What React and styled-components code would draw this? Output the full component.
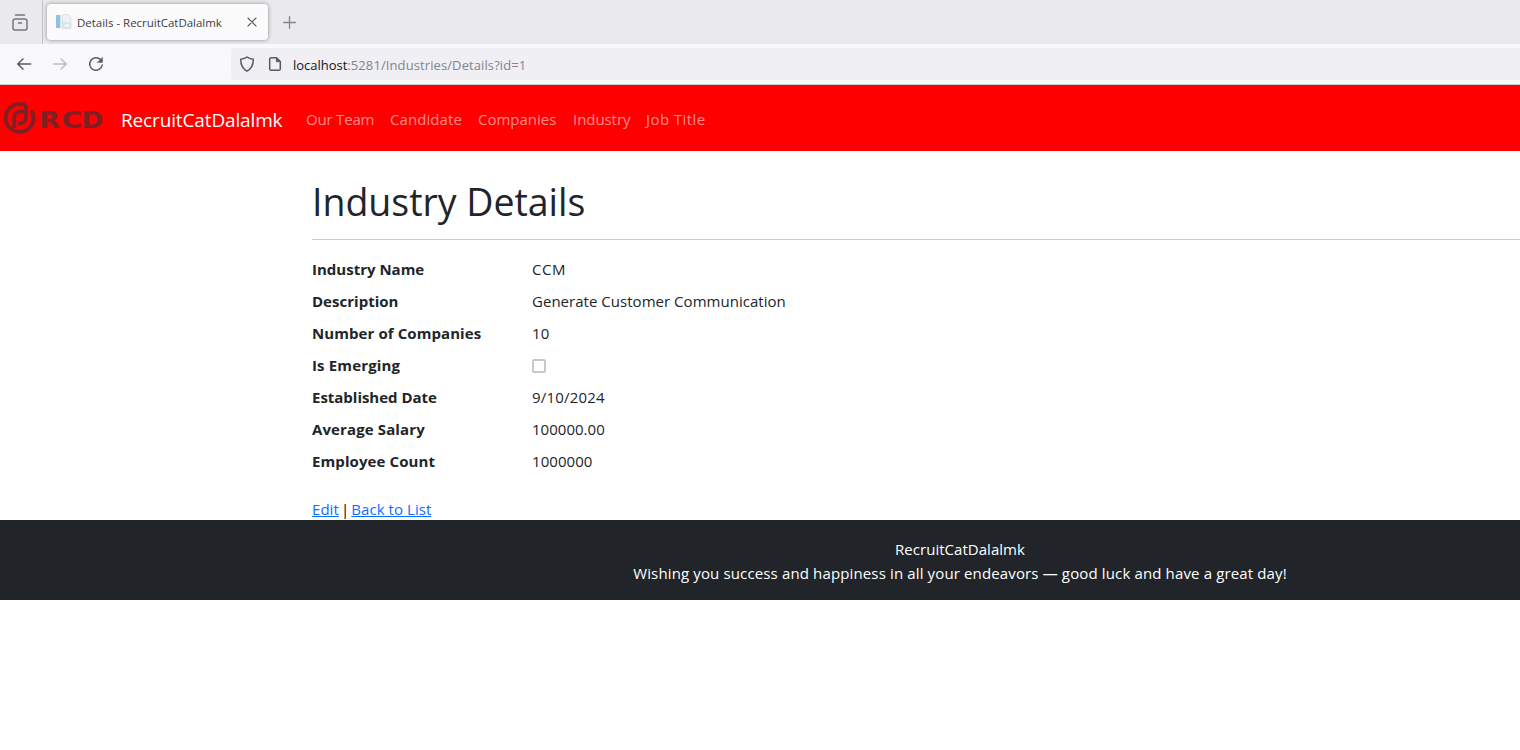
import React from 'react';
import styled, { createGlobalStyle } from 'styled-components';

const Global = createGlobalStyle`
  * { box-sizing: border-box; }
  html, body { margin: 0; overflow: hidden; background: #fff; }
  body { font-family: "Segoe UI", "Open Sans", "Noto Sans", sans-serif; font-size: 15px; line-height: 24px; color: #212529; }
`;
const Window = styled.div`width: 100%; height: 750px; background: #fff;`;
const TabStrip = styled.div`display: flex; align-items: center; height: 44px; background: #eae9ee;`;
const ViewButton = styled.div`display: flex; align-items: center; width: 43px; height: 44px; padding-left: 12px; border-right: 1px solid #c3c2c8;`;
const Tab = styled.div`
  display: flex; align-items: center; width: 221px; height: 36px; margin-left: 4px; padding: 0 11px 0 8px;
  background: #fbfbfc; border-radius: 4px; box-shadow: 0 0 4px rgba(0,0,0,.4);
  svg { flex: none; }
`;
const TabTitle = styled.span`
  flex: 1; margin: 1px 0 0 5px; font-size: 11.5px; line-height: 16px; color: #3d3c46; white-space: nowrap;
  letter-spacing: -.02px;
`;
const NewTab = styled.div`display: flex; margin: 1px 0 0 15px;`;
const Toolbar = styled.div`display: flex; align-items: center; height: 41px; background: #f9f9fb; border-bottom: 1px solid #cccccf;`;
const NavButtons = styled.div`display: flex; align-items: center; gap: 20px; width: 231px; padding-left: 16px;`;
const AddressBar = styled.div`
  display: flex; align-items: center; gap: 12px; flex: 1; height: 32px; padding-left: 8px; background: #f0eff4; border-radius: 4px 0 0 4px;
`;
const Url = styled.span`margin: 2px 0 0 -2px; font-size: 13px; line-height: 20px; color: #84838d; white-space: nowrap; letter-spacing: .1px;`;
const Host = styled.span`color: #15141a; letter-spacing: -.02px;`;
const SiteNav = styled.nav`display: flex; align-items: center; height: 66px; background: #f00;`;
const LogoText = styled.text`font: 700 23px "DejaVu Sans", sans-serif; fill: #7d2026;`;
const Brand = styled.a`margin: 3px 0 0 17px; width: 185px; font-size: 19px; line-height: 30px; color: #fff; white-space: nowrap; letter-spacing: -.14px;`;
const NavLink = styled.a`width: ${p => p.$w}px; margin-top: 2px; color: rgba(255,255,255,.55); white-space: nowrap; letter-spacing: ${p => p.$track}px;`;
const Main = styled.main`padding-left: 312px; height: 369px; padding-top: 24px;`;
const Title = styled.h1`margin: 0; padding-top: 3px; height: 56px; font-size: 37.5px; line-height: 48px; font-weight: 400; letter-spacing: -.03px;`;
const Rule = styled.hr`margin: 8px 0 17px; border: 0; height: 1px; background: #c8c9ca;`;
const List = styled.dl`display: grid; grid-template-columns: 220px 1fr; row-gap: 8px; margin: 0;`;
const Term = styled.dt`height: 24px; font-weight: 700; letter-spacing: ${p => p.$track}px;`;
const Value = styled.dd`height: 24px; margin: 0; letter-spacing: ${p => p.$track}px;`;
const Check = styled.span`display: block; width: 14px; height: 14px; margin-top: 6px; border: 2px solid #c7c7cf; border-radius: 2px;`;
const Actions = styled.div`display: flex; margin-top: 24px; color: #000;`;
const Divider = styled.span`width: 12.500px; text-align: center;`;
const Link = styled.a`color: #0d6efd; text-decoration: underline; letter-spacing: .05px;`;
const Footer = styled.footer`height: 80px; padding: 17px 0 0 400px; background: #212529; color: #fff; text-align: center;`;
const FooterLine = styled.div`letter-spacing: ${p => p.$track || 0}px;`;

const details = [
  ['Industry Name', 'CCM', 0, 0.5],
  ['Description', 'Generate Customer Communication', 0.02, 0.03],
  ['Number of Companies', '10', 0.08, 0.2],
  ['Is Emerging', null, 0.15, 0],
  ['Established Date', '9/10/2024', -0.02, 0.2],
  ['Average Salary', '100000.00', 0.12, 0.02],
  ['Employee Count', '1000000', 0.1, 0.06],
];
const links = [
  ['Our Team', 84, -0.2],
  ['Candidate', 88, 0.08],
  ['Companies', 95, 0],
  ['Industry', 73, -0.06],
  ['Job Title', 80, 0.42],
];

const stroke = { fill: 'none', stroke: '#5b5b66', strokeWidth: 1.5, strokeLinecap: 'round', strokeLinejoin: 'round' };

const Logo = () => (
  <svg width="104" height="40" viewBox="0 0 104 40">
    <g fill="none" stroke="#7d2026" strokeWidth="3.8">
      <path d="M31.300 12.500A13.900 13.900 0 1 1 19.700 6.100H22Q26 6.100 26 10V19.500A5.900 5.900 0 0 1 20.100 25.400H18" />
      <path d="M14.300 30V19.500A5.800 5.800 0 0 1 20.100 13.700H24.500" />
    </g>
    <LogoText transform="translate(38.900 29.500) scale(1.18 1)">R</LogoText>
    <LogoText transform="translate(61.400 29.500) scale(1.22 1)">C</LogoText>
    <LogoText transform="translate(81.600 29.500) scale(1.14 1)">D</LogoText>
  </svg>
);

export default function App() {
  return (
    <>
      <Global />
      <Window>
        <TabStrip>
          <ViewButton>
            <svg width="16" height="18" {...stroke} stroke="#77767f"><path d="M3.500 2h9" /><rect x="1" y="6" width="14" height="11" rx="2" /><path d="M6.500 10h3" /></svg>
          </ViewButton>
          <Tab>
            <svg width="17" height="16">
              <path d="M1 1h4v13H1z" fill="#8fc1e1" /><path d="M5 1h1.500v13H5z" fill="#d5e6f0" />
              <path d="M7.500.500h6l2.500 3v11H7.500z" fill="#eef0f2" stroke="#dfe3e7" />
              <path d="M8 8.500h8v5H8z" fill="#d9dfe5" /><path d="M9.500 10.500h5v2h-5z" fill="#f7f9fa" />
            </svg>
            <TabTitle>Details - RecruitCatDalalmk</TabTitle>
            <svg width="10" height="10" {...stroke} strokeWidth="1.1"><path d="M1 1l8 8M9 1l-8 8" /></svg>
          </Tab>
          <NewTab><svg width="13" height="13" {...stroke} stroke="#85848c" strokeWidth="1.3"><path d="M6.500 .700v11.600M.700 6.500h11.600" /></svg></NewTab>
        </TabStrip>
        <Toolbar>
          <NavButtons>
            <svg width="16" height="16" {...stroke}><path d="M1.700 8h13M7 3L1.700 8 7 13" /></svg>
            <svg width="16" height="16" {...stroke} stroke="#bcbcc2"><path d="M1.300 8h13M9 3l5.300 5L9 13" /></svg>
            <svg width="16" height="16" {...stroke}><path d="M14.200 9A6.300 6.300 0 1 1 12.500 3.600" /><path d="M14.500 1.500v5h-5z" fill="#5b5b66" strokeWidth=".5" /></svg>
          </NavButtons>
          <AddressBar>
            <svg width="16" height="16" {...stroke}><path d="M8 1C6.500 2.300 4.200 2.900 1.700 3.200C1.600 8.500 3 12.500 8 15.200C13 12.500 14.400 8.500 14.300 3.200C11.800 2.900 9.500 2.300 8 1z" /></svg>
            <svg width="16" height="16" {...stroke}><path d="M9.500 1.700H4Q2.700 1.700 2.700 3v10Q2.700 14.300 4 14.300h8Q13.300 14.300 13.300 13V5.500z" /><path d="M9.300 1.700v4h4z" fill="#5b5b66" strokeWidth=".8" /></svg>
            <Url><Host>localhost</Host>:5281/Industries/Details?id=1</Url>
          </AddressBar>
        </Toolbar>
        <SiteNav>
          <Logo />
          <Brand>RecruitCatDalalmk</Brand>
          {links.map(([t, w, track]) => <NavLink key={t} $w={w} $track={track}>{t}</NavLink>)}
        </SiteNav>
        <Main>
          <Title>Industry Details</Title>
          <Rule />
          <List>
            {details.map(([term, value, termTrack, valueTrack]) => (
              <React.Fragment key={term}>
                <Term $track={termTrack}>{term}</Term>
                <Value $track={valueTrack}>{value === null ? <Check /> : value}</Value>
              </React.Fragment>
            ))}
          </List>
          <Actions><Link>Edit</Link><Divider>|</Divider><Link>Back to List</Link></Actions>
        </Main>
        <Footer>
          <FooterLine $track={0.03}>RecruitCatDalalmk</FooterLine>
          <FooterLine $track={0.138}>Wishing you success and happiness in all your endeavors — good luck and have a great day!</FooterLine>
        </Footer>
      </Window>
    </>
  );
}
